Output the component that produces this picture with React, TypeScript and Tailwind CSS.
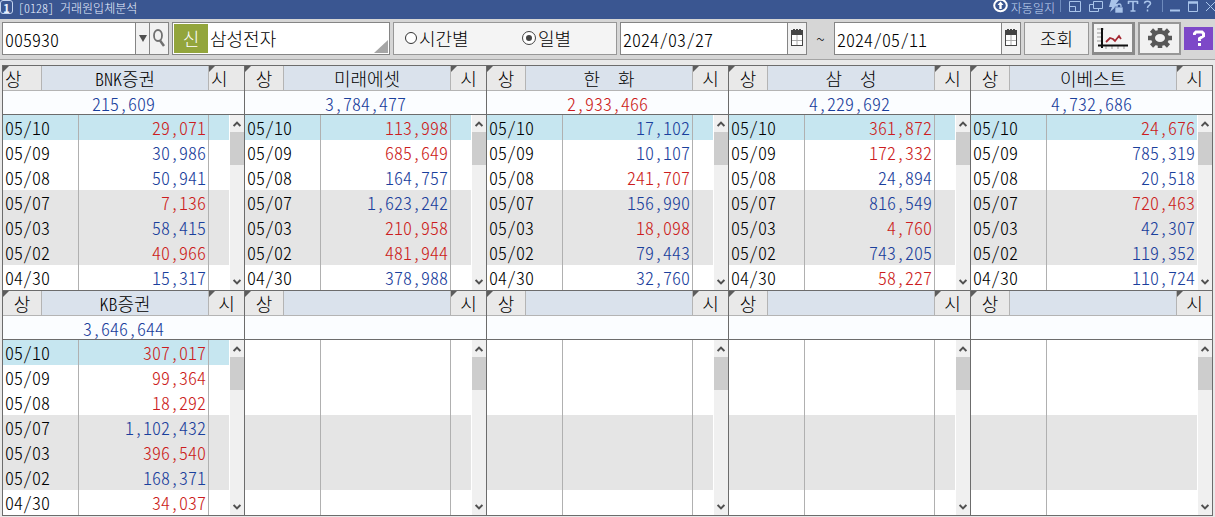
import React from "react";

type Tone = "r" | "b";
type Entry = [string, Tone];
interface Broker {
  name: string;
  total: string;
  tone: Tone;
  entries: Entry[];
  flush?: boolean;
  last?: boolean;
}

const DATES = ["05/10", "05/09", "05/08", "05/07", "05/03", "05/02", "04/30"];

const empty = (last = false): Broker => ({ name: "", total: "", tone: "b", entries: [], last });

const BROKERS: Broker[] = [
  {
    name: "BNK증권", total: "215,609", tone: "b", flush: true,
    entries: [["29,071", "r"], ["30,986", "b"], ["50,941", "b"], ["7,136", "r"], ["58,415", "b"], ["40,966", "r"], ["15,317", "b"]],
  },
  {
    name: "미래에셋", total: "3,784,477", tone: "b",
    entries: [["113,998", "r"], ["685,649", "r"], ["164,757", "b"], ["1,623,242", "b"], ["210,958", "r"], ["481,944", "r"], ["378,988", "b"]],
  },
  {
    name: "한  화", total: "2,933,466", tone: "r",
    entries: [["17,102", "b"], ["10,107", "b"], ["241,707", "r"], ["156,990", "b"], ["18,098", "r"], ["79,443", "b"], ["32,760", "b"]],
  },
  {
    name: "삼  성", total: "4,229,692", tone: "b",
    entries: [["361,872", "r"], ["172,332", "r"], ["24,894", "b"], ["816,549", "b"], ["4,760", "r"], ["743,205", "b"], ["58,227", "r"]],
  },
  {
    name: "이베스트", total: "4,732,686", tone: "b", last: true,
    entries: [["24,676", "r"], ["785,319", "b"], ["20,518", "b"], ["720,463", "r"], ["42,307", "b"], ["119,352", "b"], ["110,724", "b"]],
  },
  {
    name: "KB증권", total: "3,646,644", tone: "b",
    entries: [["307,017", "r"], ["99,364", "r"], ["18,292", "r"], ["1,102,432", "b"], ["396,540", "r"], ["168,371", "b"], ["34,037", "r"]],
  },
  empty(), empty(), empty(), empty(true),
];

const toneClass = (t: Tone) => (t === "r" ? "text-[#cc1c20]" : "text-[#1a409c]");

function Fold() {
  return (
    <svg className="absolute left-0 top-0" width="6" height="6" viewBox="0 0 6 6" aria-hidden="true">
      <path d="M0 0H6L0 6Z" fill="#5c5c5c" />
    </svg>
  );
}

function ScrollBar() {
  return (
    <div className="flex w-[15px] shrink-0 flex-col items-center border-l border-white bg-[#f0f0f0]">
      <button aria-label="위로" className="flex h-[17px] w-full items-center justify-center">
        <svg width="8" height="6" viewBox="0 0 8 6"><path d="M0.600 5L4 1.600L7.400 5" fill="none" stroke="#505050" strokeWidth="2" /></svg>
      </button>
      <div className="h-[33px] w-full bg-[#cdcdcd]" />
      <div className="flex-1" />
      <button aria-label="아래로" className="flex h-[17px] w-full items-center justify-center">
        <svg width="8" height="6" viewBox="0 0 8 6"><path d="M0.600 1L4 4.400L7.400 1" fill="none" stroke="#505050" strokeWidth="2" /></svg>
      </button>
    </div>
  );
}

function Panel({ b }: { b: Broker }) {
  const side = b.flush ? "justify-start pl-[2px]" : "justify-center";
  return (
    <section className="min-w-0 border-l border-t border-[#6c6c6c]">
      <div className="flex h-[25px] border-b border-[#b4b4b4] bg-[#e9e9e9]">
        <button className={`relative flex w-[39px] items-center border-r border-[#b4b4b4] ${side}`}><Fold />상</button>
        <h2 className="flex min-w-0 flex-1 items-center justify-center whitespace-pre border-r border-[#b4b4b4] bg-[#dae2ec]">{b.name}</h2>
        <button className={`relative flex w-[35px] items-center ${side}`}><Fold />시</button>
      </div>
      <div className={`flex h-[24px] items-center justify-center border-b border-[#6c6c6c] bg-[#fbfdff] ${toneClass(b.tone)}`}>{b.total}</div>
      <div className="flex">
        <table className="min-w-0 flex-1 table-fixed border-separate border-spacing-0 bg-white">
          <tbody>
            {DATES.map((d, i) => {
              const e = b.entries[i];
              const bg = i === 0 && e ? "bg-[#c6e6f0]" : i > 2 && i < 6 ? "bg-[#e5e5e5]" : "bg-white";
              return (
                <tr key={d} className={`h-[25px] ${bg}`}>
                  <td className="w-[76px] border-r border-[#b0b0b0] p-0 pb-[2px] pl-[2px]">{e ? d : ""}</td>
                  <td className={`p-0 pb-[2px] pr-[2px] text-right ${b.last ? "" : "border-r border-[#b0b0b0]"} ${e ? toneClass(e[1]) : ""}`}>{e ? e[0] : ""}</td>
                  {!b.last && <td className="w-[20px] p-0" />}
                </tr>
              );
            })}
          </tbody>
        </table>
        <ScrollBar />
      </div>
    </section>
  );
}

function DateBox({ label, value }: { label: string; value: string }) {
  return (
    <div className="flex h-[33px] w-[187px] shrink-0 border border-[#858585] bg-white">
      <input aria-label={label} defaultValue={value} className="min-w-0 flex-1 bg-transparent pl-[2px] pt-px outline-none" />
      <button aria-label={`${label} 달력`} className="flex w-[19px] items-center justify-center border-l border-[#858585] bg-[#f1f1f1]">
        <svg width="12" height="18" viewBox="0 0 12 18">
          <rect x="0.5" y="2.5" width="11" height="14" fill="#fff" stroke="#444" />
          <path d="M0 1H2V0H4V1H5V0H7V1H8V0H10V1H12V6H0Z" fill="#444" />
          <path d="M6 6V16M1 11.500H11" stroke="#aaa" />
        </svg>
      </button>
    </div>
  );
}

function TitleBar() {
  return (
    <header className="flex h-[19px] items-start justify-between bg-[#3a5691] text-[12px] leading-[15px] text-[#e8f0ff]">
      <div className="flex items-start gap-[5px]">
        <span className="flex h-[14px] w-[13px] items-center justify-center rounded-[3px] border border-[#c4d4f0] font-bold">1</span>
        <h1 className="whitespace-pre font-light">[0128] 거래원입체분석</h1>
      </div>
      <div className="flex items-start text-[#c4d8f4]">
        <button className="flex items-start gap-[3px]">
          <svg width="15" height="13" viewBox="0 0 15 13">
            <ellipse cx="7.5" cy="5.5" rx="6.3" ry="5.8" fill="none" stroke="#fff" strokeWidth="2" />
            <path d="M7.5 1.5L10.5 5H8.700V9H6.300V5H4.500Z" fill="#fff" />
          </svg>
          자동일지
        </button>
        <svg className="ml-[5px]" width="155" height="14" viewBox="0 0 155 14" fill="none" stroke="#a9c4ea">
          <path d="M0.5 0V12M102.500 0V12" stroke="#6e8bbd" />
          <path d="M9.500 1.500H20.500V11.500H9.500ZM9.500 6.500H15.500V11.500" />
          <path d="M33.500 1.500H42.500V8.500H33.500ZM33.500 4.500H29.500V11.500H38.500V8.500" />
          <path d="M51 0H59L56 4H59L50 12L52 7H49Z" fill="#a9c4ea" stroke="none" />
          <rect x="55" y="7" width="8" height="6" fill="#a9c4ea" stroke="#3a5691" strokeWidth="0.6" />
          <path d="M57 7V5.500C57 3.500 61 3.500 61 5.500V7" strokeWidth="1.300" />
          <path d="M68 1.500H78M73 1V11M70.500 11H75.500M68.500 1V4M77.500 1V4" strokeWidth="1.600" />
          <path d="M84.500 3.500C84.500 0.500 90.500 0.500 90.500 3.500C90.500 5.500 87.500 5.500 87.500 8M87.500 9.500V11.500" strokeWidth="1.500" />
          <path d="M110 10.500H120" strokeWidth="2" />
          <path d="M128.500 2V11.500H137.500V2" /><path d="M128 2.500H138" strokeWidth="2.500" />
          <path d="M146 2L155 11M155 2L146 11" />
        </svg>
      </div>
    </header>
  );
}

export default function App() {
  return (
    <main className="min-h-screen bg-[#e9e9e9] font-['Noto_Sans_CJK_KR',sans-serif] text-[18px] leading-[20px] font-light text-black [font-feature-settings:'hwid']">
      <TitleBar />
      <form className="flex h-[41px] items-center gap-[3px] border-b border-[#a4a4a4] bg-[#d6d6d6] px-[2px] pb-[2px]" onSubmit={(e) => e.preventDefault()}>
        <div className="flex h-[33px] w-[167px] shrink-0 border border-[#858585] bg-white">
          <input aria-label="종목코드" defaultValue="005930" className="min-w-0 flex-1 bg-transparent pl-[2px] pt-px outline-none" />
          <button aria-label="종목 목록" className="flex w-[14px] items-center justify-center border-l border-[#858585] bg-[#f1f1f1]">
            <svg width="8" height="7" viewBox="0 0 8 7"><path d="M0 0H8L4 7Z" fill="#505050" /></svg>
          </button>
          <button aria-label="종목 검색" className="flex w-[19px] items-center justify-center border-l border-[#858585] bg-[#f1f1f1]">
            <svg width="14" height="20" viewBox="0 0 14 20" fill="none" stroke="#707070">
              <ellipse cx="6" cy="7.500" rx="4" ry="5.500" strokeWidth="1.800" />
              <path d="M8 12.500L12 18" strokeWidth="2.500" />
            </svg>
          </button>
        </div>
        <div className="relative flex h-[33px] min-w-[120px] flex-1 items-center border border-[#858585] bg-white p-px">
          <span className="flex h-full w-[34px] items-center justify-center bg-[#93a53c] text-white">신</span>
          <span className="pl-[2px]">삼성전자</span>
          <svg className="absolute bottom-px right-px" width="14" height="13" viewBox="0 0 14 13"><path d="M14 0V13H0Z" fill="#a6a6a6" /></svg>
        </div>
        <fieldset className="flex h-[33px] w-[224px] shrink-0 items-center border border-[#979797] bg-[#f4f4f4] pl-[11px]">
          <label className="flex w-[118px] items-center gap-[2px]">
            <input type="radio" name="unit" className="h-[12px] w-[12px] appearance-none rounded-full border border-[#333] bg-white checked:border-[3px] checked:border-white checked:bg-[#444] checked:outline checked:outline-[#444]" />
            시간별
          </label>
          <label className="flex items-center gap-[3px]">
            <input type="radio" name="unit" defaultChecked className="h-[12px] w-[12px] appearance-none rounded-full border border-[#333] bg-white checked:border-[3px] checked:border-white checked:bg-[#444] checked:outline checked:outline-[#444]" />
            일별
          </label>
        </fieldset>
        <DateBox label="시작일" value="2024/03/27" />
        <span className="w-[21px] shrink-0 text-center text-[16px]">~</span>
        <DateBox label="종료일" value="2024/05/11" />
        <button className="h-[33px] w-[65px] shrink-0 border border-[#979797] bg-[#efefef]">조회</button>
        <button aria-label="차트" className="flex h-[33px] w-[43px] shrink-0 items-center justify-center border-2 border-b-[3px] border-r-[3px] border-[#8a8a8a] bg-[#f4f4f4]">
          <svg width="32" height="22" viewBox="0 0 32 22" fill="none">
            <path d="M0 2H7M0 6H4M0 10H4M0 14H4M9 18V22M15 18V22M21 18V22M27 18V22" stroke="#999" />
            <path d="M5 1V21M1 18.500H31" stroke="#111" strokeWidth="2" />
            <path d="M9 15L13 11L16 12L18 14L22 9L24 12" stroke="#a52832" strokeWidth="1.800" />
          </svg>
        </button>
        <button aria-label="설정" className="flex h-[33px] w-[43px] shrink-0 items-center justify-center border-2 border-[#979797] bg-[#f1f1f1]">
          <svg width="26" height="22" viewBox="0 0 26 22" fill="none" stroke="#585858">
            <path d="M13 1V21M1 11H25M4.500 3L21.500 19M21.500 3L4.500 19" strokeWidth="4.500" />
            <ellipse cx="13" cy="11" rx="7" ry="6" fill="#f1f1f1" strokeWidth="4" />
          </svg>
        </button>
        <button aria-label="도움말" className="flex h-[23px] w-[29px] shrink-0 items-center justify-center bg-[#7d48c8]">
          <svg width="14" height="16" viewBox="0 0 14 16" fill="none" stroke="#fff" strokeWidth="3">
            <path d="M2.500 5V3.500L4 2H10L11.500 3.500V6L7.500 8.500V11M7.500 13V16" />
          </svg>
        </button>
      </form>
      <div className="px-[2px] pt-[5px]">
        <div className="grid grid-cols-5 border-b border-r border-[#6c6c6c]">
          {BROKERS.map((b, i) => <Panel key={i} b={b} />)}
        </div>
      </div>
    </main>
  );
}
